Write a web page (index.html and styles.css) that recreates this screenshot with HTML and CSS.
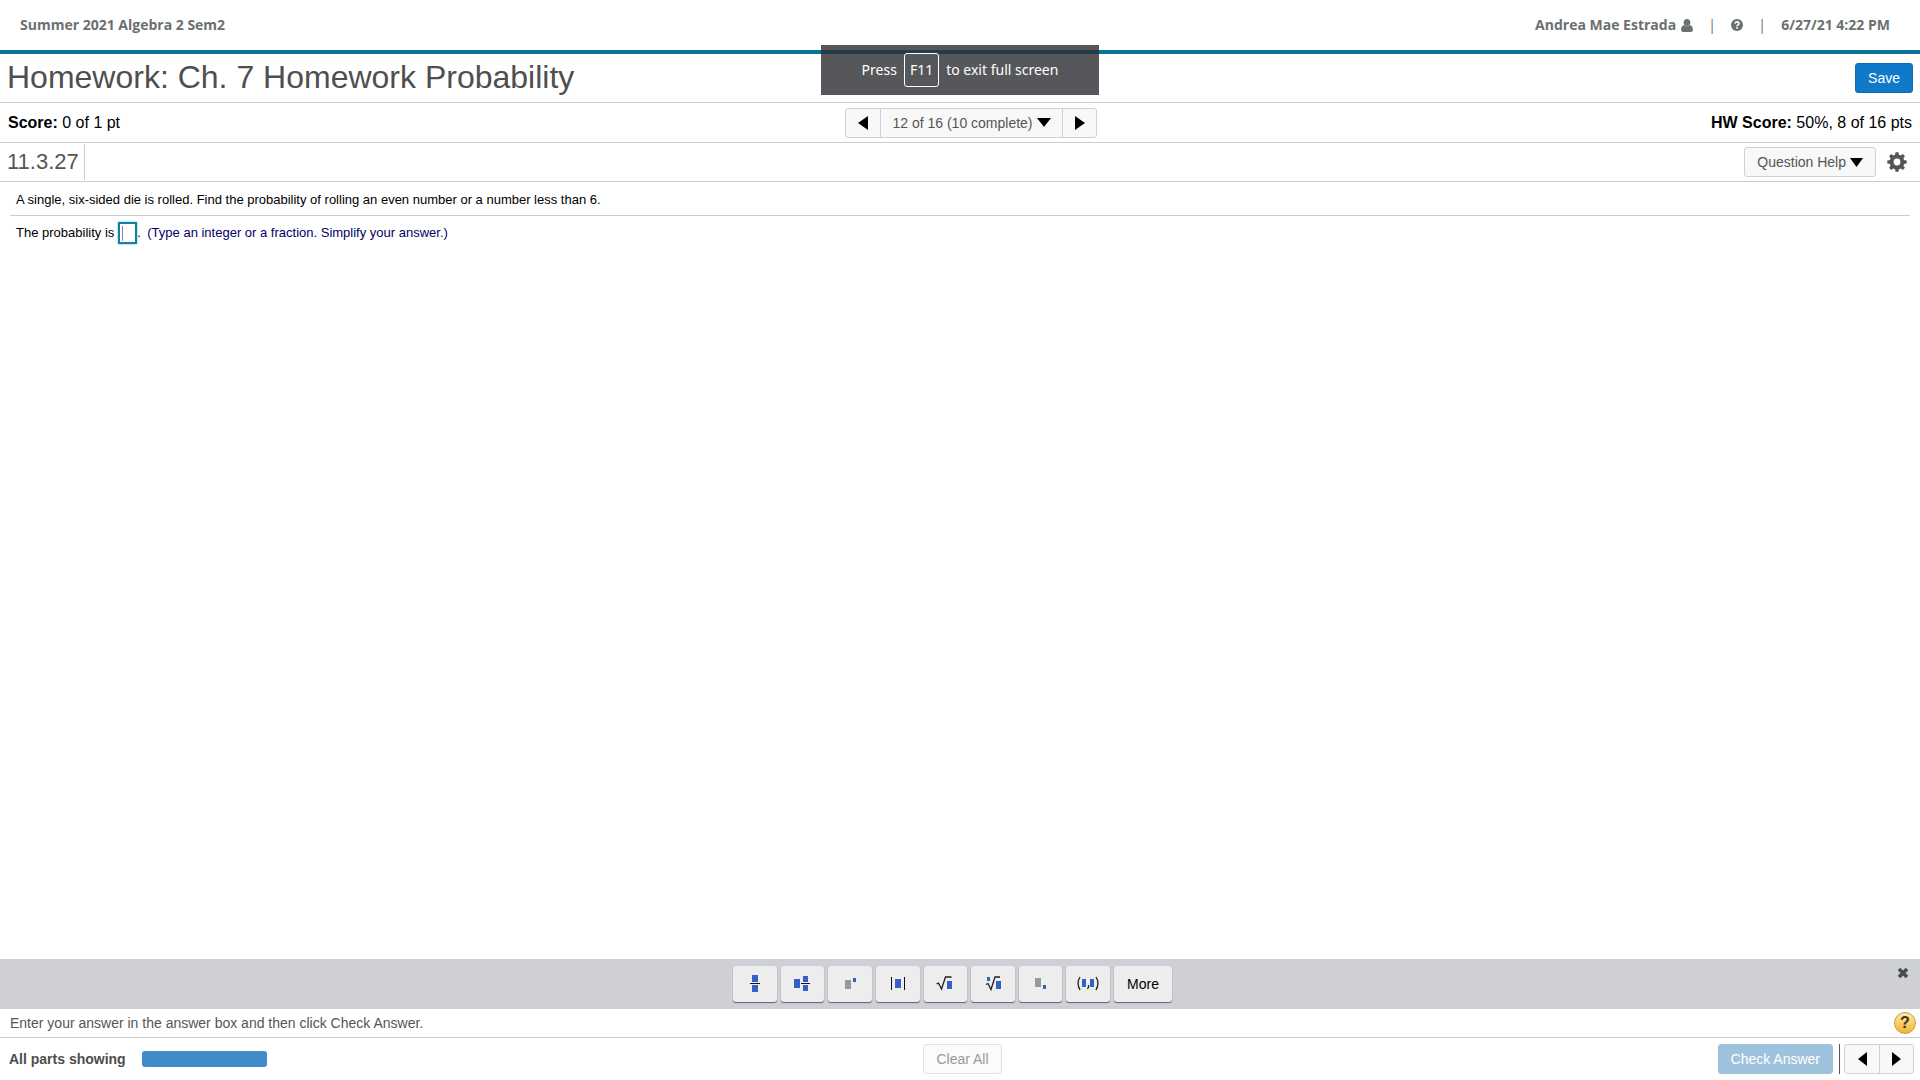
FILE: index.html
```html
<!DOCTYPE html>
<html lang="en">
<head>
<meta charset="utf-8">
<meta name="viewport" content="width=device-width, initial-scale=1">
<title>Homework: Ch. 7 Homework Probability</title>
<link rel="stylesheet" href="styles.css">
</head>
<body>
<header class="topbar">
  <span>Summer 2021 Algebra 2 Sem2</span>
  <div class="account">
    <a href="#" class="user">Andrea Mae Estrada
      <svg width="12" height="13" viewBox="0 0 12 13" aria-hidden="true"><ellipse cx="6" cy="3.5" rx="3.300" ry="3.5"/><path d="M3 6Q6 8.500 9 6Q11.900 7 11.900 11Q11.900 13 10 13H2Q.1 13 .1 11Q.1 7 3 6Z"/></svg></a>
    <span class="bar">|</span>
    <a href="#" class="help" aria-label="Help"><svg width="12" height="12" viewBox="0 0 12 12"><circle cx="6" cy="6" r="6"/><path d="M4 4.700Q4.200 2.900 6 2.900T8 4.600Q8 5.500 6.900 6Q6.100 6.400 6.100 7.300" fill="none" stroke="#fff" stroke-width="1.600"/><rect x="5.200" y="8.100" width="1.700" height="1.600" fill="#fff"/></svg></a>
    <span class="bar">|</span>
    <span class="date">6/27/21 4:22 PM</span>
  </div>
</header>
<div class="fullscreen-note">Press <kbd>F11</kbd> to exit full screen</div>

<div class="title-row">
  <h1>Homework: Ch. 7 Homework Probability</h1>
  <button type="button" class="btn primary">Save</button>
</div>

<div class="score-row">
  <span><b>Score:</b> 0 of 1 pt</span>
  <nav class="group pager" aria-label="Questions">
    <button type="button" aria-label="Previous question"><svg width="10" height="14" viewBox="0 0 10 14"><path d="M10 0V14L0 7Z"/></svg></button>
    <button type="button" class="current">12 of 16 (10 complete) <svg width="14" height="9" viewBox="0 0 14 9"><path d="M0 0H14L7 9Z"/></svg></button>
    <button type="button" aria-label="Next question"><svg width="10" height="14" viewBox="0 0 10 14"><path d="M0 0V14L10 7Z"/></svg></button>
  </nav>
  <span class="hw"><b>HW Score:</b> 50%, 8 of 16 pts</span>
</div>

<div class="exercise-row">
  <h2>11.3.27</h2>
  <div class="tools">
    <button type="button" class="btn plain">Question Help <svg width="13" height="9" viewBox="0 0 13 9"><path d="M0 0H13L6.500 9Z"/></svg></button>
    <button type="button" class="icon-btn" aria-label="Settings"><svg width="20" height="20" viewBox="-10 -10 20 20"><circle r="5.400" fill="none" stroke="#555" stroke-width="4"/><g fill="#555"><path id="t" d="M-2 -6.500L-1.500 -9.700H1.500L2 -6.500Z"/><use href="#t" transform="rotate(45)"/><use href="#t" transform="rotate(90)"/><use href="#t" transform="rotate(135)"/><use href="#t" transform="rotate(180)"/><use href="#t" transform="rotate(225)"/><use href="#t" transform="rotate(270)"/><use href="#t" transform="rotate(315)"/></g></svg></button>
  </div>
</div>

<main>
  <p class="question">A single, six-sided die is rolled. Find the probability of rolling an even number or a number less than 6.</p>
  <div class="answer"><label for="answer">The probability is</label><input id="answer" type="text"><span class="stop">.</span><span class="hint">(Type an integer or a fraction. Simplify your answer.)</span></div>
</main>

<footer>
  <div class="palette">
    <div class="keys">
      <button type="button" aria-label="Fraction"><svg width="26" height="20" viewBox="0 0 26 20"><path d="M10 1h6v7h-6zM10 11h6v7h-6z"/><path class="k" d="M8 9h10v1H8z"/></svg></button>
      <button type="button" aria-label="Mixed number"><svg width="26" height="20" viewBox="0 0 26 20"><path d="M5 5h6v9H5zM14 2h5v6h-5zM14 11h5v6h-5z"/><path class="k" d="M12 9h9v1h-9z"/></svg></button>
      <button type="button" aria-label="Exponent"><svg width="26" height="20" viewBox="0 0 26 20"><path class="g" d="M8 6h6v9H8z"/><path d="M16 4h3v4h-3z"/></svg></button>
      <button type="button" aria-label="Absolute value"><svg width="26" height="20" viewBox="0 0 26 20"><path d="M10 5h6v9h-6z"/><path class="k" d="M6 3h1v13H6zM19 3h1v13h-1z"/></svg></button>
      <button type="button" aria-label="Square root"><svg width="26" height="20" viewBox="0 0 26 20"><path d="M15 7h5v8h-5z"/><path class="l" d="M4.500 10l2-1 3 6 4-12h6"/></svg></button>
      <button type="button" aria-label="Root"><svg width="26" height="20" viewBox="0 0 26 20"><path d="M16 7h5v8h-5zM7 3h3v4H7z"/><path class="l" d="M6 10.500l2-1 3 6 4-12.500h5"/></svg></button>
      <button type="button" aria-label="Subscript"><svg width="26" height="20" viewBox="0 0 26 20"><path class="g" d="M7 4h6v9H7z"/><path d="M15 11h3v4h-3z"/></svg></button>
      <button type="button" aria-label="Ordered pair"><svg width="26" height="20" viewBox="0 0 26 20"><path d="M7 5h4v8H7zM15 5h4v8h-4z"/><path class="l" d="M5 3Q1 9 5 16M21 3Q25 9 21 16M13.500 11v2l-1 2"/></svg></button>
      <button type="button">More</button>
    </div>
    <button type="button" class="close" aria-label="Close palette"><svg width="12" height="12" viewBox="0 0 12 12"><path d="M2 2L10 10M10 2L2 10" stroke="#484b51" stroke-width="3.600"/></svg></button>
  </div>
  <div class="instruction">
    <span>Enter your answer in the answer box and then click Check Answer.</span>
    <a href="#" class="tip" aria-label="Help">?</a>
  </div>
  <div class="actions">
    <div class="parts"><b id="parts">All parts showing</b><div class="progress" role="progressbar" aria-labelledby="parts" aria-valuenow="100"></div></div>
    <button type="button" class="btn plain clear" disabled>Clear All</button>
    <div class="submit">
      <button type="button" class="btn check" disabled>Check Answer</button>
      <nav class="group" aria-label="Move between questions">
        <button type="button" aria-label="Previous"><svg width="9" height="14" viewBox="0 0 9 14"><path d="M9 0V14L0 7Z"/></svg></button>
        <button type="button" aria-label="Next"><svg width="9" height="14" viewBox="0 0 9 14"><path d="M0 0V14L9 7Z"/></svg></button>
      </nav>
    </div>
  </div>
</footer>
</body>
</html>
```
FILE: styles.css
```css
* { box-sizing: border-box; }
body {
  margin: 0;
  min-height: 100vh;
  display: flex;
  flex-direction: column;
  background: #fff;
  color: #000;
  font: 14px/20px "Liberation Sans", Arial, sans-serif;
}
button { font: inherit; color: inherit; padding: 0; cursor: pointer; }
h1, h2, p { margin: 0; font-weight: 400; }
svg { flex: none; }

.topbar {
  display: flex;
  justify-content: space-between;
  align-items: center;
  height: 54px;
  padding: 0 30px 0 20px;
  border-bottom: 4px solid #0b7796;
  color: #6a7070;
  font: bold 14px/20px "Open Sans", sans-serif;
}
.account { display: flex; align-items: center; }
.account a { display: flex; align-items: center; gap: 5px; color: inherit; text-decoration: none; }
.account svg { fill: #6a7070; }
.bar { width: 38px; text-align: center; font-weight: 400; }

.fullscreen-note {
  position: absolute;
  top: 45px;
  left: 50%;
  transform: translateX(-50%);
  width: 278px;
  height: 50px;
  display: flex;
  align-items: center;
  justify-content: center;
  gap: 7px;
  background: rgba(43, 45, 50, .8);
  color: #fff;
  font: 14px/20px "Noto Sans", sans-serif;
}
.fullscreen-note kbd {
  padding: 6px 5px;
  border: 1px solid #fff;
  border-radius: 3px;
  font: inherit;
}

.title-row, .exercise-row {
  display: flex;
  justify-content: space-between;
  align-items: center;
  border-bottom: 1px solid #c9ccd4;
}
.title-row { height: 49px; padding: 0 7px; }
h1 { padding-bottom: 2px; font-size: 32px; line-height: 44px; color: #4f4f4f; }

.btn {
  height: 30px;
  padding: 0 12px;
  border: 1px solid #d0d0d0;
  border-radius: 3px;
  display: flex;
  align-items: center;
  gap: 4px;
  white-space: nowrap;
}
.primary { background: #1179ca; border-color: #106bb4; color: #fff; }
.plain { background: #f8f8f8; color: #555; }

.score-row {
  display: grid;
  grid-template-columns: 1fr auto 1fr;
  align-items: center;
  height: 40px;
  padding: 0 8px;
  border-bottom: 1px solid #c9ccd4;
  font-size: 16px;
}
.pager { margin-left: 22px; }
.hw { text-align: right; }
.group {
  display: flex;
  height: 30px;
  border: 1px solid #d0d0d0;
  border-radius: 3px;
  background: #f8f8f8;
  overflow: hidden;
  font-size: 14px;
}
.group button {
  display: flex;
  align-items: center;
  justify-content: center;
  gap: 4px;
  width: 34px;
  border: 0;
  background: none;
  color: #555;
}
.group button + button { border-left: 1px solid #d0d0d0; }
.group .current { width: 182px; }

.exercise-row { height: 39px; padding: 0 13px 0 0; }
h2 {
  align-self: stretch;
  margin: 1px 0;
  padding: 0 5px 0 7px;
  border-right: 1px solid #c9ccd4;
  font-size: 22px;
  line-height: 36px;
  color: #555;
}
.tools { display: flex; align-items: center; gap: 11px; }
.icon-btn { display: flex; border: 0; background: none; }

main { flex: 1; padding: 0 10px; font-size: 13px; }
.question { padding: 8px 6px 6px; line-height: 19px; border-bottom: 1px solid #c9ccd4; }
.answer { display: flex; align-items: center; padding: 6px; }
.answer input {
  width: 19px;
  height: 22px;
  margin-left: 4px;
  padding: 0 2px;
  border: 2px solid #14809b;
  outline: 0;
  box-shadow: 0 0 2px #4db5c9;
  font: inherit;
  background: linear-gradient(#8a8aa8, #8a8aa8) 2px center / 1px 15px no-repeat #fff;
}
.stop { width: 10px; }
.hint { color: #000066; }

.palette {
  display: grid;
  grid-template-columns: 1fr auto 1fr;
  align-items: center;
  height: 50px;
  padding-right: 11px;
  background: #cfd0d6;
}
.keys {
  grid-column: 2;
  display: grid;
  grid-template-columns: repeat(8, 1fr) 58px;
  gap: 4px;
  width: 439px;
  margin-right: 4px;
}
.keys button {
  display: flex;
  align-items: center;
  justify-content: center;
  height: 36px;
  border: 0;
  border-radius: 3px;
  background: #ededee;
  box-shadow: 0 1px 1px #606166;
}
.keys svg { fill: #3460c8; }
.keys .k { fill: #111; }
.keys .g { fill: #999; }
.keys .l { fill: none; stroke: #222; stroke-width: 1.3; }
.close {
  justify-self: end;
  align-self: start;
  display: flex;
  padding-top: 8px;
  border: 0;
  background: none;
}

.instruction {
  display: flex;
  justify-content: space-between;
  align-items: center;
  height: 29px;
  padding: 0 4px 0 10px;
  border-bottom: 1px solid #c9ccd4;
  color: #555;
}
.tip {
  width: 22px;
  height: 22px;
  border: 1px solid #c99a45;
  border-radius: 50%;
  background: linear-gradient(#ffe9a0, #f3b52f);
  color: #333;
  font-size: 16px;
  font-weight: bold;
  text-align: center;
  text-decoration: none;
}
.actions {
  display: grid;
  grid-template-columns: 1fr auto 1fr;
  align-items: center;
  height: 42px;
  padding: 0 6px 0 9px;
}
.parts { display: flex; align-items: center; gap: 16px; color: #4d4d4d; }
.progress { width: 125px; height: 16px; border-radius: 3px; background: #428bca; }
.clear { margin-left: 2px; background: #fbfbfb; border-color: #e2e2e2; color: #999; }
.submit { display: flex; justify-content: flex-end; }
.check { background: #9fc2dc; border-color: #9fc2dc; color: #fff; }
.submit::before { content: ""; order: 1; width: 1px; margin-left: 6px; background: #555; }
.submit .group { order: 2; margin-left: 4px; }
```
